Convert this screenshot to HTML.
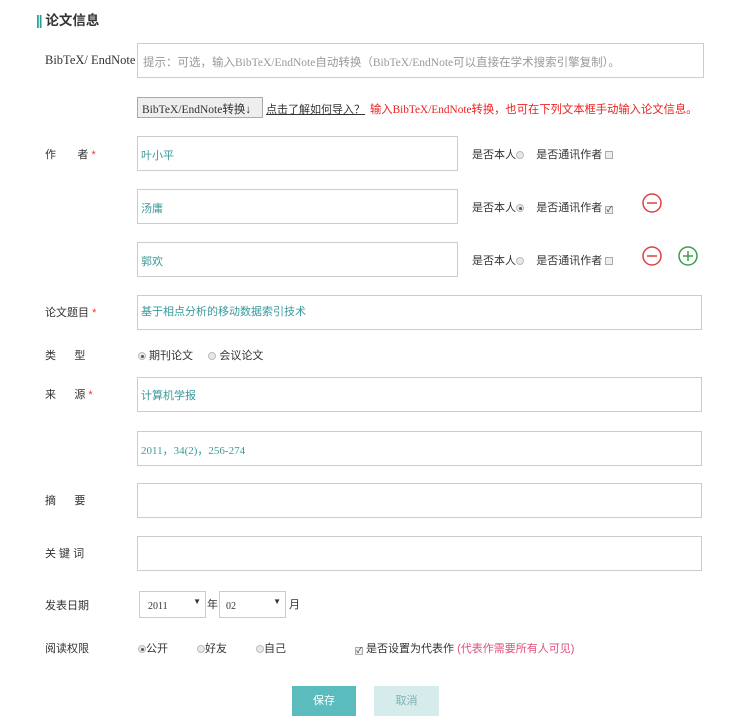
<!DOCTYPE html>
<html><head><meta charset="utf-8"><style>
body{margin:0;width:734px;height:720px;background:#fff;font-family:"Liberation Sans","Noto Sans CJK SC",sans-serif;font-size:11px;color:#333;position:relative;overflow:hidden}
.a{position:absolute;white-space:nowrap}
.box{position:absolute;border:1px solid #ccc;background:#fff;box-sizing:border-box}
.v{color:#3a9a9a;font-size:11px;position:absolute;left:3px}
.star{color:#e33}
.rad{display:inline-block;width:8px;height:8px;border-radius:50%;border:1px solid #bbb;background:#e8e8e8;vertical-align:-1px;box-sizing:border-box;position:relative}
.rad.on::after{content:"";position:absolute;left:1.5px;top:1.5px;width:3px;height:3px;border-radius:50%;background:#555}
.chk{display:inline-block;width:8px;height:8px;border:1px solid #aaa;background:#eee;vertical-align:-1px;box-sizing:border-box;font-size:8px;line-height:6px;text-align:center;color:#333;margin-left:3px}
.serif{font-family:"Liberation Serif","Noto Sans CJK SC",serif}
</style></head><body>
<div class="a" style="left:36px;top:9px;font-size:13.5px;font-weight:bold;color:#333"><span style="color:#2a9d9a;letter-spacing:-1px">||</span> 论文信息</div>

<div class="a serif" style="left:45px;top:53px;font-size:12.5px">BibTeX/ EndNote</div>
<div class="box" style="left:137px;top:43px;width:567px;height:35px"><span class="a" style="left:5px;top:10px;color:#999;font-size:11.5px">提示：可选，输入<span class="serif">BibTeX/EndNote</span>自动转换（<span class="serif">BibTeX/EndNote</span>可以直接在学术搜索引擎复制）。</span></div>

<div class="box serif" style="left:137px;top:97px;width:126px;height:21px;background:#eee;border-color:#aaa;font-size:11.5px;padding:3px 0 0 4px;white-space:nowrap;overflow:hidden">BibTeX/EndNote转换↓</div>
<div class="a" style="left:266px;top:101px;text-decoration:underline;color:#333">点击了解如何导入？</div>
<div class="a" style="left:370px;top:101px;color:#e22;font-size:11.3px">输入<span class="serif">BibTeX/EndNote</span>转换，也可在下列文本框手动输入论文信息。</div>

<div class="a" style="left:45px;top:146px">作&nbsp;&nbsp;&nbsp;&nbsp;&nbsp;&nbsp;&nbsp;者 <span class="star">*</span></div>
<div class="box" style="left:137px;top:136px;width:321px;height:35px"><span class="v" style="top:10px">叶小平</span></div>
<div class="box" style="left:137px;top:189px;width:321px;height:35px"><span class="v" style="top:10px">汤庸</span></div>
<div class="box" style="left:137px;top:242px;width:321px;height:35px"><span class="v" style="top:10px">郭欢</span></div>

<div class="a" style="left:472px;top:146px">是否本人<span class="rad"></span>&nbsp;&nbsp;&nbsp;&nbsp;是否通讯作者<span class="chk"></span></div>
<div class="a" style="left:472px;top:199px">是否本人<span class="rad on"></span>&nbsp;&nbsp;&nbsp;&nbsp;是否通讯作者<span class="chk">✓</span></div>
<div class="a" style="left:472px;top:252px">是否本人<span class="rad"></span>&nbsp;&nbsp;&nbsp;&nbsp;是否通讯作者<span class="chk"></span></div>

<svg class="a" style="left:641px;top:192px" width="22" height="22"><circle cx="11" cy="11" r="9" fill="none" stroke="#e04040" stroke-width="1.5"/><line x1="6" y1="11" x2="16" y2="11" stroke="#e04040" stroke-width="1.5"/></svg>
<svg class="a" style="left:641px;top:245px" width="22" height="22"><circle cx="11" cy="11" r="9" fill="none" stroke="#e04040" stroke-width="1.5"/><line x1="6" y1="11" x2="16" y2="11" stroke="#e04040" stroke-width="1.5"/></svg>
<svg class="a" style="left:677px;top:245px" width="22" height="22"><circle cx="11" cy="11" r="9" fill="none" stroke="#3aa04a" stroke-width="1.5"/><line x1="6" y1="11" x2="16" y2="11" stroke="#3aa04a" stroke-width="1.5"/><line x1="11" y1="6" x2="11" y2="16" stroke="#3aa04a" stroke-width="1.5"/></svg>

<div class="a" style="left:45px;top:304px">论文题目 <span class="star">*</span></div>
<div class="box" style="left:137px;top:295px;width:565px;height:35px"><span class="v" style="top:7px">基于相点分析的移动数据索引技术</span></div>

<div class="a" style="left:45px;top:347px">类&nbsp;&nbsp;&nbsp;&nbsp;&nbsp;&nbsp;型</div>
<div class="a" style="left:138px;top:347px"><span class="rad on"></span> 期刊论文&nbsp;&nbsp;&nbsp;&nbsp;&nbsp;<span class="rad"></span> 会议论文</div>

<div class="a" style="left:45px;top:386px">来&nbsp;&nbsp;&nbsp;&nbsp;&nbsp;&nbsp;源 <span class="star">*</span></div>
<div class="box" style="left:137px;top:377px;width:565px;height:35px"><span class="v" style="top:9px">计算机学报</span></div>
<div class="box" style="left:137px;top:431px;width:565px;height:35px"><span class="v serif" style="top:10px">2011，34(2)，256-274</span></div>

<div class="a" style="left:45px;top:492px">摘&nbsp;&nbsp;&nbsp;&nbsp;&nbsp;&nbsp;要</div>
<div class="box" style="left:137px;top:483px;width:565px;height:35px"></div>
<div class="a" style="left:45px;top:545px">关 键 词</div>
<div class="box" style="left:137px;top:536px;width:565px;height:35px"></div>

<div class="a" style="left:45px;top:597px">发表日期</div>
<div class="box serif" style="left:139px;top:591px;width:67px;height:27px;font-size:10px;padding:9px 0 0 8px">2011<span style="position:absolute;right:4px;top:5px;font-size:8px">▼</span></div>
<div class="a" style="left:207px;top:596px">年</div>
<div class="box serif" style="left:219px;top:591px;width:67px;height:27px;font-size:10px;padding:9px 0 0 6px">02<span style="position:absolute;right:4px;top:5px;font-size:8px">▼</span></div>
<div class="a" style="left:289px;top:596px">月</div>

<div class="a" style="left:45px;top:640px">阅读权限</div>
<div class="a" style="left:138px;top:640px"><span class="rad on"></span>公开</div>
<div class="a" style="left:197px;top:640px"><span class="rad"></span>好友</div>
<div class="a" style="left:256px;top:640px"><span class="rad"></span>自己</div>
<div class="a" style="left:352px;top:640px"><span class="chk">✓</span> 是否设置为代表作 <span style="color:#e0507a">(代表作需要所有人可见)</span></div>

<div class="a" style="left:292px;top:686px;width:64px;height:30px;background:#5bbcbe;color:#fff;text-align:center;line-height:30px">保存</div>
<div class="a" style="left:374px;top:686px;width:65px;height:30px;background:#d6ecec;color:#7fb0b0;text-align:center;line-height:30px">取消</div>
</body></html>
